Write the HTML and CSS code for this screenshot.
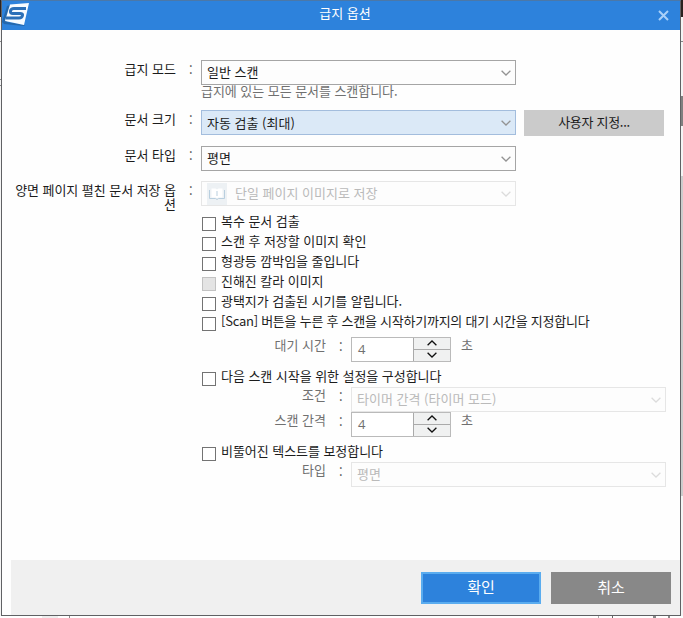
FILE: index.html
```html
<!DOCTYPE html>
<html lang="ko">
<head>
<meta charset="utf-8">
<title>급지 옵션</title>
<link rel="stylesheet" href="styles.css">
</head>
<body>
<svg width="0" height="0" class="defs"><defs>
<symbol id="down" viewBox="0 0 10 6"><path d="M.6 .8L5 5L9.4 .8" fill="none" stroke="currentColor" stroke-width="1.3"/></symbol>
<symbol id="up" viewBox="0 0 10 6"><path d="M.6 5.2L5 1L9.4 5.2" fill="none" stroke="currentColor" stroke-width="1.3"/></symbol>
</defs></svg>
<div class="screen">
<div class="edge left"><i class="dark"></i><i class="line l1"></i><i class="line l2"></i><i class="line l3"></i></div>
<main class="dialog">
<header class="titlebar">
<svg class="logo" width="29" height="24" viewBox="0 0 29 24"><path d="M2 22L0 20L5 4L8 3L5 20L23 23L22 24Z" fill="#2468ad"/><path d="M8 2.500L27 1L22 23L3 19Z" fill="#f7fbff"/><path d="M24 6.500H12Q9 6.500 8.500 9Q8 11.500 11 11.500H18Q21 11.500 20.500 13.500Q20 16 17 16H4" fill="none" stroke="#2c70b8" stroke-width="3"/></svg>
<h1>급지 옵션</h1>
<svg class="close" width="11" height="11" viewBox="0 0 11 11"><path d="M1 1L10 10M10 1L1 10" stroke="#a9d0f8" stroke-width="2"/></svg>
</header>
<form class="form">
<div class="row r1"><label>급지 모드</label><b>:</b><div class="select">일반 스캔<svg><use href="#down"/></svg></div></div>
<p class="hint">급지에 있는 모든 문서를 스캔합니다.</p>
<div class="row r2"><label>문서 크기</label><b>:</b><div class="select active">자동 검출 (최대)<svg><use href="#down"/></svg></div><button type="button" class="custom">사용자 지정...</button></div>
<div class="row r3"><label>문서 타입</label><b>:</b><div class="select">평면<svg><use href="#down"/></svg></div></div>
<div class="row r4"><label>양면 페이지 펼친 문서 저장 옵션</label><b>:</b><div class="select off"><span class="book"><svg width="16" height="12" viewBox="0 0 16 12"><path d="M2.500 .5H6.500L8 1.500L9.500 .5H13.500V9.500H9L8 10.500L7 9.500H2.500Z" fill="#fff"/><path d="M.5 2V10.500H6.500L8 11.500L9.500 10.500H15.500V2M8 3V8" fill="none" stroke="#b9cfdf"/></svg></span>단일 페이지 이미지로 저장<svg><use href="#down"/></svg></div></div>
<div class="checks">
<div class="check"><i></i>복수 문서 검출</div>
<div class="check"><i></i>스캔 후 저장할 이미지 확인</div>
<div class="check"><i></i>형광등 깜박임을 줄입니다</div>
<div class="check"><i class="disabled"></i>진해진 칼라 이미지</div>
<div class="check"><i></i>광택지가 검출된 시기를 알립니다.</div>
<div class="check long"><i></i>[Scan] 버튼을 누른 후 스캔을 시작하기까지의 대기 시간을 지정합니다</div>
</div>
<div class="row sub"><label>대기 시간</label><b>:</b><div class="spinner"><span>4</span><div class="steps"><i><svg><use href="#up"/></svg></i><i><svg><use href="#down"/></svg></i></div></div><em>초</em></div>
<div class="check next"><i></i>다음 스캔 시작을 위한 설정을 구성합니다</div>
<div class="row sub"><label>조건</label><b>:</b><div class="select off">타이머 간격 (타이머 모드)<svg><use href="#down"/></svg></div></div>
<div class="row sub"><label>스캔 간격</label><b>:</b><div class="spinner"><span>4</span><div class="steps"><i><svg><use href="#up"/></svg></i><i><svg><use href="#down"/></svg></i></div></div><em>초</em></div>
<div class="check next"><i></i>비뚤어진 텍스트를 보정합니다</div>
<div class="row sub"><label>타입</label><b>:</b><div class="select off">평면<svg><use href="#down"/></svg></div></div>
</form>
<footer class="footer"><button type="button" class="ok">확인</button><button type="button" class="cancel">취소</button></footer>
</main>
<div class="edge right"><i class="dark"></i><i class="line l1"></i><i class="thumb"></i><i class="track"></i></div>
<div class="below"><i class="tab"></i><i class="stem"></i><i class="rule"></i><i class="rule dk"></i><i class="ticks"></i></div>
</div>
</body>
</html>
```
FILE: styles.css
```css
* { box-sizing: border-box; }
body { margin: 0; width: 683px; height: 618px; overflow: hidden; background: #fff; color: #1c1c1c; font: 13px/18px "Noto Sans CJK KR", "Noto Sans", sans-serif; }
.defs { display: none; }
.screen { display: grid; grid-template: 616px 2px / 1px 680px 2px; }
.dialog { display: flex; flex-direction: column; border: 1px solid #606164; border-top-color: #4b78a8; background: #fefefe; }
.titlebar { height: 29px; flex: none; display: grid; grid-template-columns: 40px 1fr 40px; background: #2d82dc; color: #fff; }
.logo { margin: 1px 0 0; }
h1 { margin: 3px 0 0; padding-left: 8px; font: inherit; text-align: center; }
.close { margin: 9px 0 0 18px; }
.form { height: 530px; flex: none; padding-top: 30px; }
.row { display: flex; height: 25px; }
.row label { width: 174px; flex: none; text-align: right; white-space: nowrap; }
.row b { width: 25px; flex: none; padding: 1px 0 0 13px; font-weight: 400; color: #444; }
.select { display: flex; align-items: center; width: 315px; height: 25px; padding: 0 9px 2px 5px; border: 1px solid #a5a5a5; background: #fdfdfd; }
.select > svg { width: 10px; height: 6px; margin: 2px -5px 0 auto; color: #939393; }
.select.active { background: #dbe9f7; border-color: #a3bddd; }
.r2 .select { padding-bottom: 0; }
.r2 .select > svg { margin-top: 0; }
.select.off { color: #bababa; border-color: #e6e6e6; }
.select.off > svg { color: #dcdcdc; }
.hint { height: 25px; margin: 0 0 0 199px; line-height: 12px; color: #707070; letter-spacing: -.05px; }
.custom { width: 140px; height: 26px; margin-left: 8px; padding: 0 0 2px; border: 0; background: #cbcbcb; color: inherit; font: inherit; letter-spacing: -.3px; }
.r3 { margin-top: 11px; }
.r4 { margin-top: 10px; }
.r4 label { white-space: normal; padding-left: 5px; line-height: 14px; padding-top: 2px; letter-spacing: -.05px; }
.book { display: grid; place-items: center; width: 20px; height: 22px; margin: 2px 8px 0 0; background: #edf1f4; }
.checks { margin-top: 6px; }
.check { display: flex; height: 20px; margin-left: 200px; line-height: 18px; white-space: nowrap; letter-spacing: -.05px; }
.check.long { letter-spacing: -.25px; }
.check i { width: 14px; height: 14px; flex: none; margin: 5px 5px 0 0; border: 1px solid #737373; background: #fff; }
.check i.disabled { background: #e4e4e4; border-color: #c2c2c2; }
.sub { color: #707070; }
.sub label { width: 324px; line-height: 15px; }
.checks + .sub { margin-top: 5px; }
.next { height: 21px; margin-top: 4px; }
.sub + .next { margin-top: 5px; height: 20px; }
.spinner { display: flex; width: 100px; height: 25px; border: 1px solid #bababa; background: #fff; }
.spinner span { width: 61px; padding: 2px 0 0 6px; font-family: "Open Sans", sans-serif; }
.steps { width: 37px; display: flex; flex-direction: column; border-left: 1px solid #aaa; }
.steps i { flex: 1; display: grid; place-items: center; background: #f0f1f1; }
.steps i + i { border-top: 1px solid #aaa; }
.steps svg { width: 10px; height: 6px; margin-top: -1px; color: #111; }
.sub em { margin-left: 10px; font-style: normal; line-height: 15px; }
.footer { height: 55px; flex: none; margin-left: 9px; padding: 12px 9px 0 0; display: flex; justify-content: flex-end; gap: 10px; background: #f0f0f0; }
.footer button { width: 120px; height: 32px; padding: 0 0 4px; border: 0; background: #888; color: #fff; font: 15px "Noto Sans CJK KR", sans-serif; }
.footer .ok { background: #2d82dc; border: 2px solid #5aacef; }
.edge { display: flex; flex-direction: column; background: #f4f4f4; }
.dark { height: 17px; background: #2a2220; }
.line { height: 1px; background: #888; margin-top: 24px; }
.l2 { margin-top: 37px; }
.l3 { margin-top: 5px; }
.thumb { height: 30px; margin-top: 54px; background: #808080; }
.track { height: 320px; margin-top: 50px; background: #ccc; }
.below { grid-column: 1 / -1; display: flex; background: #fff; }
.tab { width: 16px; margin-left: 42px; background: #eee; }
.stem { width: 1px; margin-left: 11px; background: #888; }
.rule { width: 1px; margin-left: 528px; background: #aaa; }
.rule.dk { margin-left: 13px; background: #666; }
.ticks { width: 17px; margin-left: 40px; border: solid #888; border-width: 0 2px 0 3px; }
```
